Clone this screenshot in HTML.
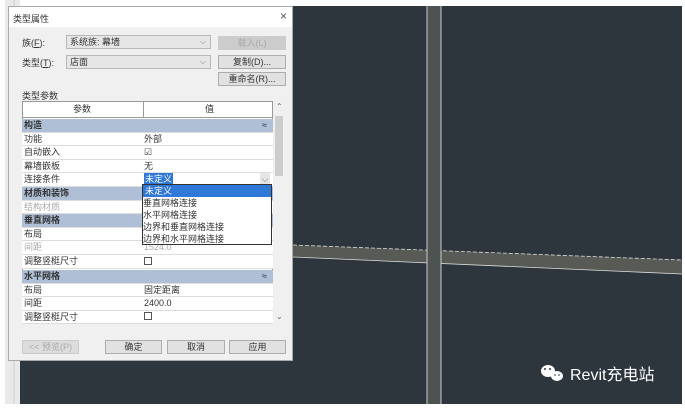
<!DOCTYPE html>
<html><head><meta charset="utf-8"><style>
*{margin:0;padding:0;box-sizing:border-box}
body{width:685px;height:408px;overflow:hidden;background:#fff;position:relative;font-family:"Liberation Sans","Noto Sans CJK SC",sans-serif;font-size:9px;color:#333}
.a{position:absolute}
.btn{position:absolute;background:#e1e1e1;border:1px solid #adadad;text-align:center;line-height:12px;font-size:9px}
.combo{position:absolute;background:#e6e6e6;border:1px solid #b8b8b8;line-height:12px;padding-left:3px}
.combo i{position:absolute;right:4px;top:0;font-style:normal;color:#777;font-size:8px}
.row{position:absolute;left:22px;width:251px;height:13.6px;border-bottom:1px solid #ddd;line-height:13px;background:#fff}
.row span{position:absolute;left:2px}
.row b{position:absolute;left:122px;font-weight:normal}
.row.h{background:#aebfd6;font-weight:bold}
.row.g{color:#aaa}
.cb{display:inline-block;width:8px;height:8px;border:1px solid #555;vertical-align:middle;margin-top:-2px}
</style></head><body>
<svg class="a" style="left:0;top:0" width="685" height="408">
<rect x="5" y="0" width="15" height="404" fill="#e9e9e9"/>
<line x1="14" y1="0" x2="14" y2="404" stroke="#cfcfcf"/>
<rect x="20" y="6" width="662" height="398" fill="#2d353d"/>
<polygon points="293,245 682,260 682,274 293,257" fill="#575a55"/>
<line x1="293" y1="245" x2="682" y2="260" stroke="#ddd" stroke-width="0.8" stroke-dasharray="4,2"/>
<line x1="293" y1="257" x2="682" y2="274" stroke="#ddd" stroke-width="0.8"/>
<rect x="427" y="6" width="14" height="398" fill="#4d5350"/>
<line x1="427" y1="6" x2="427" y2="404" stroke="#ccc" stroke-width="1"/>
<line x1="441" y1="6" x2="441" y2="404" stroke="#ccc" stroke-width="1"/>
<g fill="#fff"><ellipse cx="548" cy="371" rx="7" ry="6"/><ellipse cx="557" cy="376" rx="6" ry="5"/></g>
<g fill="#2d353d"><circle cx="545" cy="369" r="1"/><circle cx="550" cy="369" r="1"/><circle cx="555" cy="375" r="0.8"/><circle cx="559" cy="375" r="0.8"/></g>
<text x="570" y="380" fill="#fff" font-size="16" font-family="Liberation Sans,Noto Sans CJK SC,sans-serif">Revit充电站</text>
</svg>
<div class="a" style="left:8px;top:6px;width:285px;height:355px;background:#f0f0f0;border:1px solid #aaa"></div>
<div class="a" style="left:9px;top:7px;width:283px;height:20px;background:#fff"></div>
<div class="a" style="left:13px;top:12px">类型属性</div>
<div class="a" style="left:280px;top:9px;font-size:12px;color:#555">×</div>
<div class="a" style="left:22px;top:36px">族(<u>F</u>):</div>
<div class="combo" style="left:66px;top:35px;width:145px;height:14px">系统族: 幕墙<i>⌵</i></div>
<div class="btn" style="left:218px;top:36px;width:68px;height:14px;color:#aaa;background:#ccc;border-color:#ccc">载入(L)</div>
<div class="a" style="left:22px;top:56px">类型(<u>T</u>):</div>
<div class="combo" style="left:66px;top:55px;width:145px;height:14px">店面<i>⌵</i></div>
<div class="btn" style="left:218px;top:55px;width:68px;height:14px">复制(D)...</div>
<div class="btn" style="left:218px;top:72px;width:68px;height:14px">重命名(R)...</div>
<div class="a" style="left:22px;top:89px">类型参数</div>
<div class="a" style="left:22px;top:101px;width:251px;height:222px;border:1px solid #999;background:#fff"></div>
<div class="a" style="left:22px;top:101px;width:251px;height:17px;border:1px solid #999;background:#fff;line-height:15px"><span class="a" style="left:50px">参数</span><span class="a" style="left:120px;top:0;height:15px;border-left:1px solid #999"></span><span class="a" style="left:182px">值</span></div>
<div class="a" style="left:273px;top:101px;width:12px;height:222px;background:#f0f0f0"></div>
<div class="a" style="left:275px;top:116px;width:8px;height:60px;background:#cdcdcd"></div>
<div class="a" style="left:276px;top:102px;font-size:8px;color:#666">⌃</div>
<div class="a" style="left:276px;top:312px;font-size:8px;color:#666">⌄</div>
<div class="row h" style="top:119px"><span>构造</span><b style="left:240px">≈</b></div>
<div class="row" style="top:132.6px"><span>功能</span><b>外部</b></div>
<div class="row" style="top:146.2px"><span>自动嵌入</span><b>☑</b></div>
<div class="row" style="top:159.8px"><span>幕墙嵌板</span><b>无</b></div>
<div class="row" style="top:173.4px"><span>连接条件</span><b style="background:#3078d8;color:#fff;padding:0 1px">未定义</b><b style="left:238px;color:#666;background:#e6e6e6;width:10px;text-align:center">⌵</b></div>
<div class="row h" style="top:187px"><span>材质和装饰</span></div>
<div class="row g" style="top:200.6px"><span>结构材质</span></div>
<div class="row h" style="top:214.2px"><span>垂直网格</span></div>
<div class="row" style="top:227.8px"><span>布局</span></div>
<div class="row g" style="top:241.4px"><span>间距</span><b>1524.0</b></div>
<div class="row" style="top:255px"><span>调整竖梃尺寸</span><b><i class="cb"></i></b></div>
<div class="row h" style="top:270px"><span>水平网格</span><b style="left:240px">≈</b></div>
<div class="row" style="top:283.6px"><span>布局</span><b>固定距离</b></div>
<div class="row" style="top:297.2px"><span>间距</span><b>2400.0</b></div>
<div class="row" style="top:310.8px"><span>调整竖梃尺寸</span><b><i class="cb"></i></b></div>
<div class="a" style="left:142px;top:184px;width:130px;height:61px;background:#fff;border:1px solid #333;line-height:12px">
<div style="background:#3078d8;color:#fff;padding-left:2px">未定义</div>
<div>垂直网格连接</div><div>水平网格连接</div><div>边界和垂直网格连接</div><div>边界和水平网格连接</div></div>
<div class="btn" style="left:22px;top:340px;width:57px;height:14px;color:#aaa;background:#ddd;border-color:#ccc">&lt;&lt; 预览(P)</div>
<div class="btn" style="left:105px;top:340px;width:57px;height:14px">确定</div>
<div class="btn" style="left:167px;top:340px;width:58px;height:14px">取消</div>
<div class="btn" style="left:229px;top:340px;width:57px;height:14px">应用</div>
</body></html>
